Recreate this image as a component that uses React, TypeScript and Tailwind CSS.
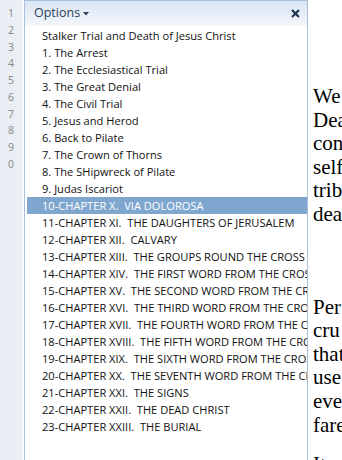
import React from "react";

const items = [
  "Stalker Trial and Death of Jesus Christ",
  "1. The Arrest",
  "2. The Ecclesiastical Trial",
  "3. The Great Denial",
  "4. The Civil Trial",
  "5. Jesus and Herod",
  "6. Back to Pilate",
  "7. The Crown of Thorns",
  "8. The SHipwreck of Pilate",
  "9. Judas Iscariot",
  "10-CHAPTER X.  VIA DOLOROSA",
  "11-CHAPTER XI.  THE DAUGHTERS OF JERUSALEM",
  "12-CHAPTER XII.  CALVARY",
  "13-CHAPTER XIII.  THE GROUPS ROUND THE CROSS",
  "14-CHAPTER XIV.  THE FIRST WORD FROM THE CROSS",
  "15-CHAPTER XV.  THE SECOND WORD FROM THE CROSS",
  "16-CHAPTER XVI.  THE THIRD WORD FROM THE CROSS",
  "17-CHAPTER XVII.  THE FOURTH WORD FROM THE CROSS",
  "18-CHAPTER XVIII.  THE FIFTH WORD FROM THE CROSS",
  "19-CHAPTER XIX.  THE SIXTH WORD FROM THE CROSS",
  "20-CHAPTER XX.  THE SEVENTH WORD FROM THE CROSS",
  "21-CHAPTER XXI.  THE SIGNS",
  "22-CHAPTER XXII.  THE DEAD CHRIST",
  "23-CHAPTER XXIII.  THE BURIAL",
];

const nums = ["1", "2", "3", "4", "5", "6", "7", "8", "9", "0"];

const para1 = ["We", "Dea", "con", "self", "trib", "dea"];
const para2 = ["Per", "cru", "that", "use", "eve", "fare"];

export default function App() {
  return (
    <div className="flex h-[460px] w-[342px] overflow-hidden bg-white">
      <div
        className="w-[22px] shrink-0 bg-[#eaeff6] pt-[5px] text-center text-[10.5px] text-[#8c8c8c]"
        style={{ fontFamily: '"Noto Sans", sans-serif' }}
      >
        {nums.map((n) => (
          <div key={n} className="h-[16.75px] leading-[16px]">
            {n}
          </div>
        ))}
      </div>
      <div className="w-[2px] shrink-0 bg-[#f7f9fc]" />
      <div
        className="flex w-[284px] shrink-0 flex-col border-x border-t border-[#a7bedc] bg-white"
        style={{ fontFamily: '"Open Sans", "Noto Sans", sans-serif' }}
      >
        <div className="flex h-[25px] shrink-0 items-center justify-between bg-gradient-to-b from-[#d9e4f3] to-[#f4f7fb] pl-[9px] pr-[6px]">
          <div className="flex items-center gap-[3px] text-[12.5px] text-[#2a3f5c]">
            <span>Options</span>
            <svg width="6" height="4" viewBox="0 0 6 4">
              <path d="M0 0H6L3 3.5Z" fill="#2a3f5c" />
            </svg>
          </div>
          <svg width="9" height="9" viewBox="0 0 9 9" className="mr-[1px]">
            <path d="M1 1L8 8M8 1L1 8" stroke="#1e3352" strokeWidth="2.2" />
          </svg>
        </div>
        <div className="overflow-hidden pl-[2px] pt-px">
          {items.map((t, i) => (
            <div
              key={i}
              className={
                "h-[17px] overflow-hidden whitespace-pre pl-[15px] text-[11.1px] leading-[17px] " +
                (i === 10 ? "bg-[#7ea6cf] text-white" : "text-[#111]")
              }
            >
              {t}
            </div>
          ))}
        </div>
      </div>
      <div
        className="min-w-0 flex-1 overflow-hidden whitespace-nowrap pl-[5px] pt-[85px] text-[21px] leading-[23.6px] text-black"
        style={{ fontFamily: '"Liberation Serif", serif' }}
      >
        {para1.map((l, i) => (
          <div key={i}>{l}</div>
        ))}
        <div className="h-[69px]" />
        {para2.map((l, i) => (
          <div key={i}>{l}</div>
        ))}
        <div className="mt-[16px]">It</div>
      </div>
    </div>
  );
}
